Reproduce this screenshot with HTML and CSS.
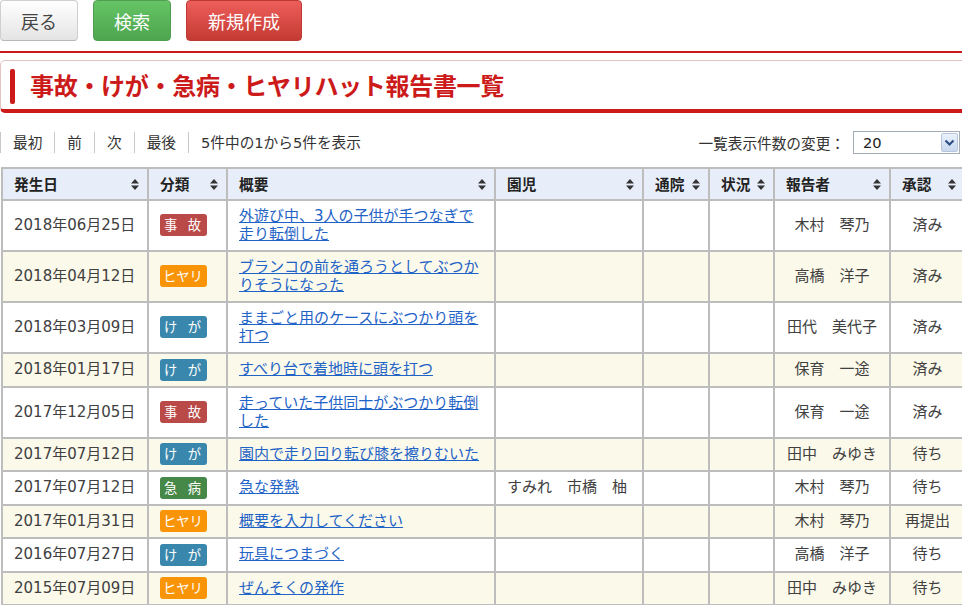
FILE: index.html
```html
<!DOCTYPE html>
<html lang="ja">
<head>
<meta charset="utf-8">
<title>事故・けが・急病・ヒヤリハット報告書一覧</title>
<link rel="stylesheet" href="styles.css">
</head>
<body>
<div class="page">
  <div class="toolbar">
    <button class="btn btn-default">戻る</button>
    <button class="btn btn-green">検索</button>
    <button class="btn btn-red">新規作成</button>
  </div>
  <div class="rule"></div>
  <h1 class="title-box"><span class="title-bar"></span><span class="title-text">事故・けが・急病・ヒヤリハット報告書一覧</span></h1>

  <div class="pager">
    <ul class="pager-links">
      <li>最初</li>
      <li>前</li>
      <li>次</li>
      <li>最後</li>
      <li>5件中の1から5件を表示</li>
    </ul>
    <div class="per-page">
      <span>一覧表示件数の変更：</span>
      <div class="select"><span class="select-value">20</span><span class="select-arrow"><svg width="11" height="8" viewBox="0 0 11 8"><path d="M1.5 1.5 L5.5 5.5 L9.5 1.5" fill="none" stroke="#2d4f86" stroke-width="2.2"/></svg></span></div>
    </div>
  </div>

  <table class="list">
    <colgroup>
      <col class="c-date"><col class="c-type"><col class="c-sum"><col class="c-child"><col class="c-hosp"><col class="c-stat"><col class="c-rep"><col class="c-appr">
    </colgroup>
    <thead>
      <tr>
        <th><div class="th-in"><span>発生日</span><svg class="sort" width="8" height="11" viewBox="0 0 8 11"><path d="M4 0 L8 4.5 L0 4.5 Z M0 6.5 L8 6.5 L4 11 Z" fill="#333"/></svg></div></th>
        <th><div class="th-in"><span>分類</span><svg class="sort" width="8" height="11" viewBox="0 0 8 11"><path d="M4 0 L8 4.5 L0 4.5 Z M0 6.5 L8 6.5 L4 11 Z" fill="#333"/></svg></div></th>
        <th><div class="th-in"><span>概要</span><svg class="sort" width="8" height="11" viewBox="0 0 8 11"><path d="M4 0 L8 4.5 L0 4.5 Z M0 6.5 L8 6.5 L4 11 Z" fill="#333"/></svg></div></th>
        <th><div class="th-in"><span>園児</span><svg class="sort" width="8" height="11" viewBox="0 0 8 11"><path d="M4 0 L8 4.5 L0 4.5 Z M0 6.5 L8 6.5 L4 11 Z" fill="#333"/></svg></div></th>
        <th><div class="th-in"><span>通院</span><svg class="sort" width="8" height="11" viewBox="0 0 8 11"><path d="M4 0 L8 4.5 L0 4.5 Z M0 6.5 L8 6.5 L4 11 Z" fill="#333"/></svg></div></th>
        <th><div class="th-in"><span>状況</span><svg class="sort" width="8" height="11" viewBox="0 0 8 11"><path d="M4 0 L8 4.5 L0 4.5 Z M0 6.5 L8 6.5 L4 11 Z" fill="#333"/></svg></div></th>
        <th><div class="th-in"><span>報告者</span><svg class="sort" width="8" height="11" viewBox="0 0 8 11"><path d="M4 0 L8 4.5 L0 4.5 Z M0 6.5 L8 6.5 L4 11 Z" fill="#333"/></svg></div></th>
        <th><div class="th-in"><span>承認</span><svg class="sort" width="8" height="11" viewBox="0 0 8 11"><path d="M4 0 L8 4.5 L0 4.5 Z M0 6.5 L8 6.5 L4 11 Z" fill="#333"/></svg></div></th>
      </tr>
    </thead>
    <tbody>
      <tr>
        <td>2018年06月25日</td>
        <td class="type"><span class="badge b-jiko two"><span>事</span><span>故</span></span></td>
        <td><a href="#">外遊び中、3人の子供が手つなぎで<br>走り転倒した</a></td>
        <td></td><td></td><td></td>
        <td class="center">木村　琴乃</td>
        <td class="center">済み</td>
      </tr>
      <tr>
        <td>2018年04月12日</td>
        <td class="type"><span class="badge b-hiyari">ヒヤリ</span></td>
        <td><a href="#">ブランコの前を通ろうとしてぶつかりそうになった</a></td>
        <td></td><td></td><td></td>
        <td class="center">高橋　洋子</td>
        <td class="center">済み</td>
      </tr>
      <tr>
        <td>2018年03月09日</td>
        <td class="type"><span class="badge b-kega two"><span>け</span><span>が</span></span></td>
        <td><a href="#">ままごと用のケースにぶつかり頭を打つ</a></td>
        <td></td><td></td><td></td>
        <td class="center">田代　美代子</td>
        <td class="center">済み</td>
      </tr>
      <tr>
        <td>2018年01月17日</td>
        <td class="type"><span class="badge b-kega two"><span>け</span><span>が</span></span></td>
        <td><a href="#">すべり台で着地時に頭を打つ</a></td>
        <td></td><td></td><td></td>
        <td class="center">保育　一途</td>
        <td class="center">済み</td>
      </tr>
      <tr>
        <td>2017年12月05日</td>
        <td class="type"><span class="badge b-jiko two"><span>事</span><span>故</span></span></td>
        <td><a href="#">走っていた子供同士がぶつかり転倒した</a></td>
        <td></td><td></td><td></td>
        <td class="center">保育　一途</td>
        <td class="center">済み</td>
      </tr>
      <tr>
        <td>2017年07月12日</td>
        <td class="type"><span class="badge b-kega two"><span>け</span><span>が</span></span></td>
        <td><a href="#">園内で走り回り転び膝を擦りむいた</a></td>
        <td></td><td></td><td></td>
        <td class="center">田中　みゆき</td>
        <td class="center">待ち</td>
      </tr>
      <tr>
        <td>2017年07月12日</td>
        <td class="type"><span class="badge b-kyubyo two"><span>急</span><span>病</span></span></td>
        <td><a href="#">急な発熱</a></td>
        <td>すみれ　市橋　柚</td><td></td><td></td>
        <td class="center">木村　琴乃</td>
        <td class="center">待ち</td>
      </tr>
      <tr>
        <td>2017年01月31日</td>
        <td class="type"><span class="badge b-hiyari">ヒヤリ</span></td>
        <td><a href="#">概要を入力してください</a></td>
        <td></td><td></td><td></td>
        <td class="center">木村　琴乃</td>
        <td class="center">再提出</td>
      </tr>
      <tr>
        <td>2016年07月27日</td>
        <td class="type"><span class="badge b-kega two"><span>け</span><span>が</span></span></td>
        <td><a href="#">玩具につまづく</a></td>
        <td></td><td></td><td></td>
        <td class="center">高橋　洋子</td>
        <td class="center">待ち</td>
      </tr>
      <tr>
        <td>2015年07月09日</td>
        <td class="type"><span class="badge b-hiyari">ヒヤリ</span></td>
        <td><a href="#">ぜんそくの発作</a></td>
        <td></td><td></td><td></td>
        <td class="center">田中　みゆき</td>
        <td class="center">待ち</td>
      </tr>
    </tbody>
  </table>
</div>
</body>
</html>
```

FILE: styles.css
```css
* { box-sizing: border-box; }

html, body {
  margin: 0;
  padding: 0;
  background: #fff;
}

body {
  font-family: "DejaVu Sans", "Noto Sans CJK JP", sans-serif;
  font-size: 15px;
  color: #404040;
  overflow: hidden;
}

.page {
  width: 962px;
  overflow: hidden;
}

/* toolbar */
.toolbar {
  display: flex;
  gap: 15px;
  height: 41px;
}

.btn {
  height: 41px;
  padding: 0;
  border-radius: 4px;
  font-family: "Noto Sans CJK JP", sans-serif;
  font-size: 18px;
  line-height: 1;
  white-space: nowrap;
  text-align: center;
  cursor: pointer;
}

.btn-default {
  width: 78px;
  color: #444;
  background: linear-gradient(#ffffff, #e4e4e4);
  border: 1px solid #cfcfcf;
  border-bottom-color: #b8b8b8;
}

.btn-green {
  width: 78px;
  color: #fff;
  background: linear-gradient(#65c465, #4ea54e);
  border: 1px solid #4f9f4f;
}

.btn-red {
  width: 116px;
  color: #fff;
  background: linear-gradient(#ee5e5a, #c43a33);
  border: 1px solid #bb3a33;
}

.rule {
  margin-top: 10px;
  height: 2px;
  background: #cc1a1a;
}

/* title */
.title-box {
  display: flex;
  align-items: center;
  gap: 15px;
  margin: 7px 0 0 0;
  width: 980px;
  height: 53px;
  border: 1px solid #e2c4c4;
  border-bottom: 4px solid #cc1a1a;
  border-radius: 5px 0 0 5px;
  padding-left: 9px;
  font-family: "Noto Sans CJK JP", sans-serif;
  font-size: 24px;
  font-weight: bold;
  color: #cc1a1a;
  line-height: 1;
}

.title-bar {
  width: 5px;
  height: 35px;
  margin-top: 2px;
  border-radius: 2px;
  background: #cc1a1a;
}

.title-text {
  letter-spacing: -0.3px;
}

/* pager */
.pager {
  display: flex;
  justify-content: space-between;
  align-items: center;
  margin-top: 18px;
  height: 23px;
  font-size: 14.67px;
}

.pager-links {
  display: flex;
  list-style: none;
  margin: 0;
  padding: 0;
}

.pager-links li {
  padding: 0 12px;
  line-height: 21px;
  border-left: 1px solid #c8c8c8;
  color: #333;
}

.per-page {
  display: flex;
  align-items: center;
  gap: 8px;
  padding-right: 2px;
  color: #333;
}

.select {
  display: flex;
  align-items: center;
  justify-content: space-between;
  width: 107px;
  height: 23px;
  border: 1px solid #a4acb8;
  background: #fff;
}

.select-value {
  padding-left: 9px;
  color: #222;
}

.select-arrow {
  display: flex;
  align-items: center;
  justify-content: center;
  width: 17px;
  height: 19px;
  margin-right: 1px;
  border: 1px solid #b7c6dc;
  border-radius: 2px;
  background: linear-gradient(#eaf1fb, #c9d8ee);
}

/* table */
.list {
  margin-top: 13px;
  margin-left: 1px;
  width: 963px;
  table-layout: fixed;
  border-collapse: collapse;
}

.c-date { width: 146px; }
.c-type { width: 79px; }
.c-sum { width: 268px; }
.c-child { width: 148px; }
.c-hosp { width: 66px; }
.c-stat { width: 65px; }
.c-rep { width: 116px; }
.c-appr { width: 75px; }

.list th,
.list td {
  border: 2px solid #bdbdbd;
  vertical-align: middle;
}

.list th {
  height: 32px;
  padding: 0 8px 0 11px;
  background: #e8eef9;
  font-family: "Noto Sans CJK JP", sans-serif;
  font-weight: bold;
  font-size: 14.67px;
  color: #222;
  text-align: left;
}

.th-in {
  display: flex;
  align-items: center;
  justify-content: space-between;
  line-height: 20px;
}

.sort { flex: none; margin-top: 1px; }

.list td {
  padding: 6px 8px 7px 11px;
  line-height: 18px;
  color: #404040;
}

.list tbody tr:nth-child(even) td {
  background: #fbf9ea;
}

.list td.center {
  text-align: center;
  padding-left: 4px;
  padding-right: 4px;
}

.list td.type {
  padding-left: 11px;
  padding-right: 4px;
}

.list a {
  color: #1f63c6;
  text-decoration: underline;
}

.badge {
  display: inline-block;
  width: 47px;
  height: 22px;
  margin: -2px 0;
  padding-left: 3px;
  border-radius: 3px;
  font-family: "Noto Sans CJK JP", sans-serif;
  font-size: 13.3px;
  line-height: 22px;
  color: #fff;
  text-align: left;
  vertical-align: middle;
  white-space: nowrap;
}

.badge.two {
  display: inline-flex;
  justify-content: space-between;
  padding: 0 6px 0 4px;
}

.b-jiko { background: #b94a48; }
.b-kega { background: #3a87ad; }
.b-kyubyo { background: #468847; }
.b-hiyari { background: #f89406; }
```
